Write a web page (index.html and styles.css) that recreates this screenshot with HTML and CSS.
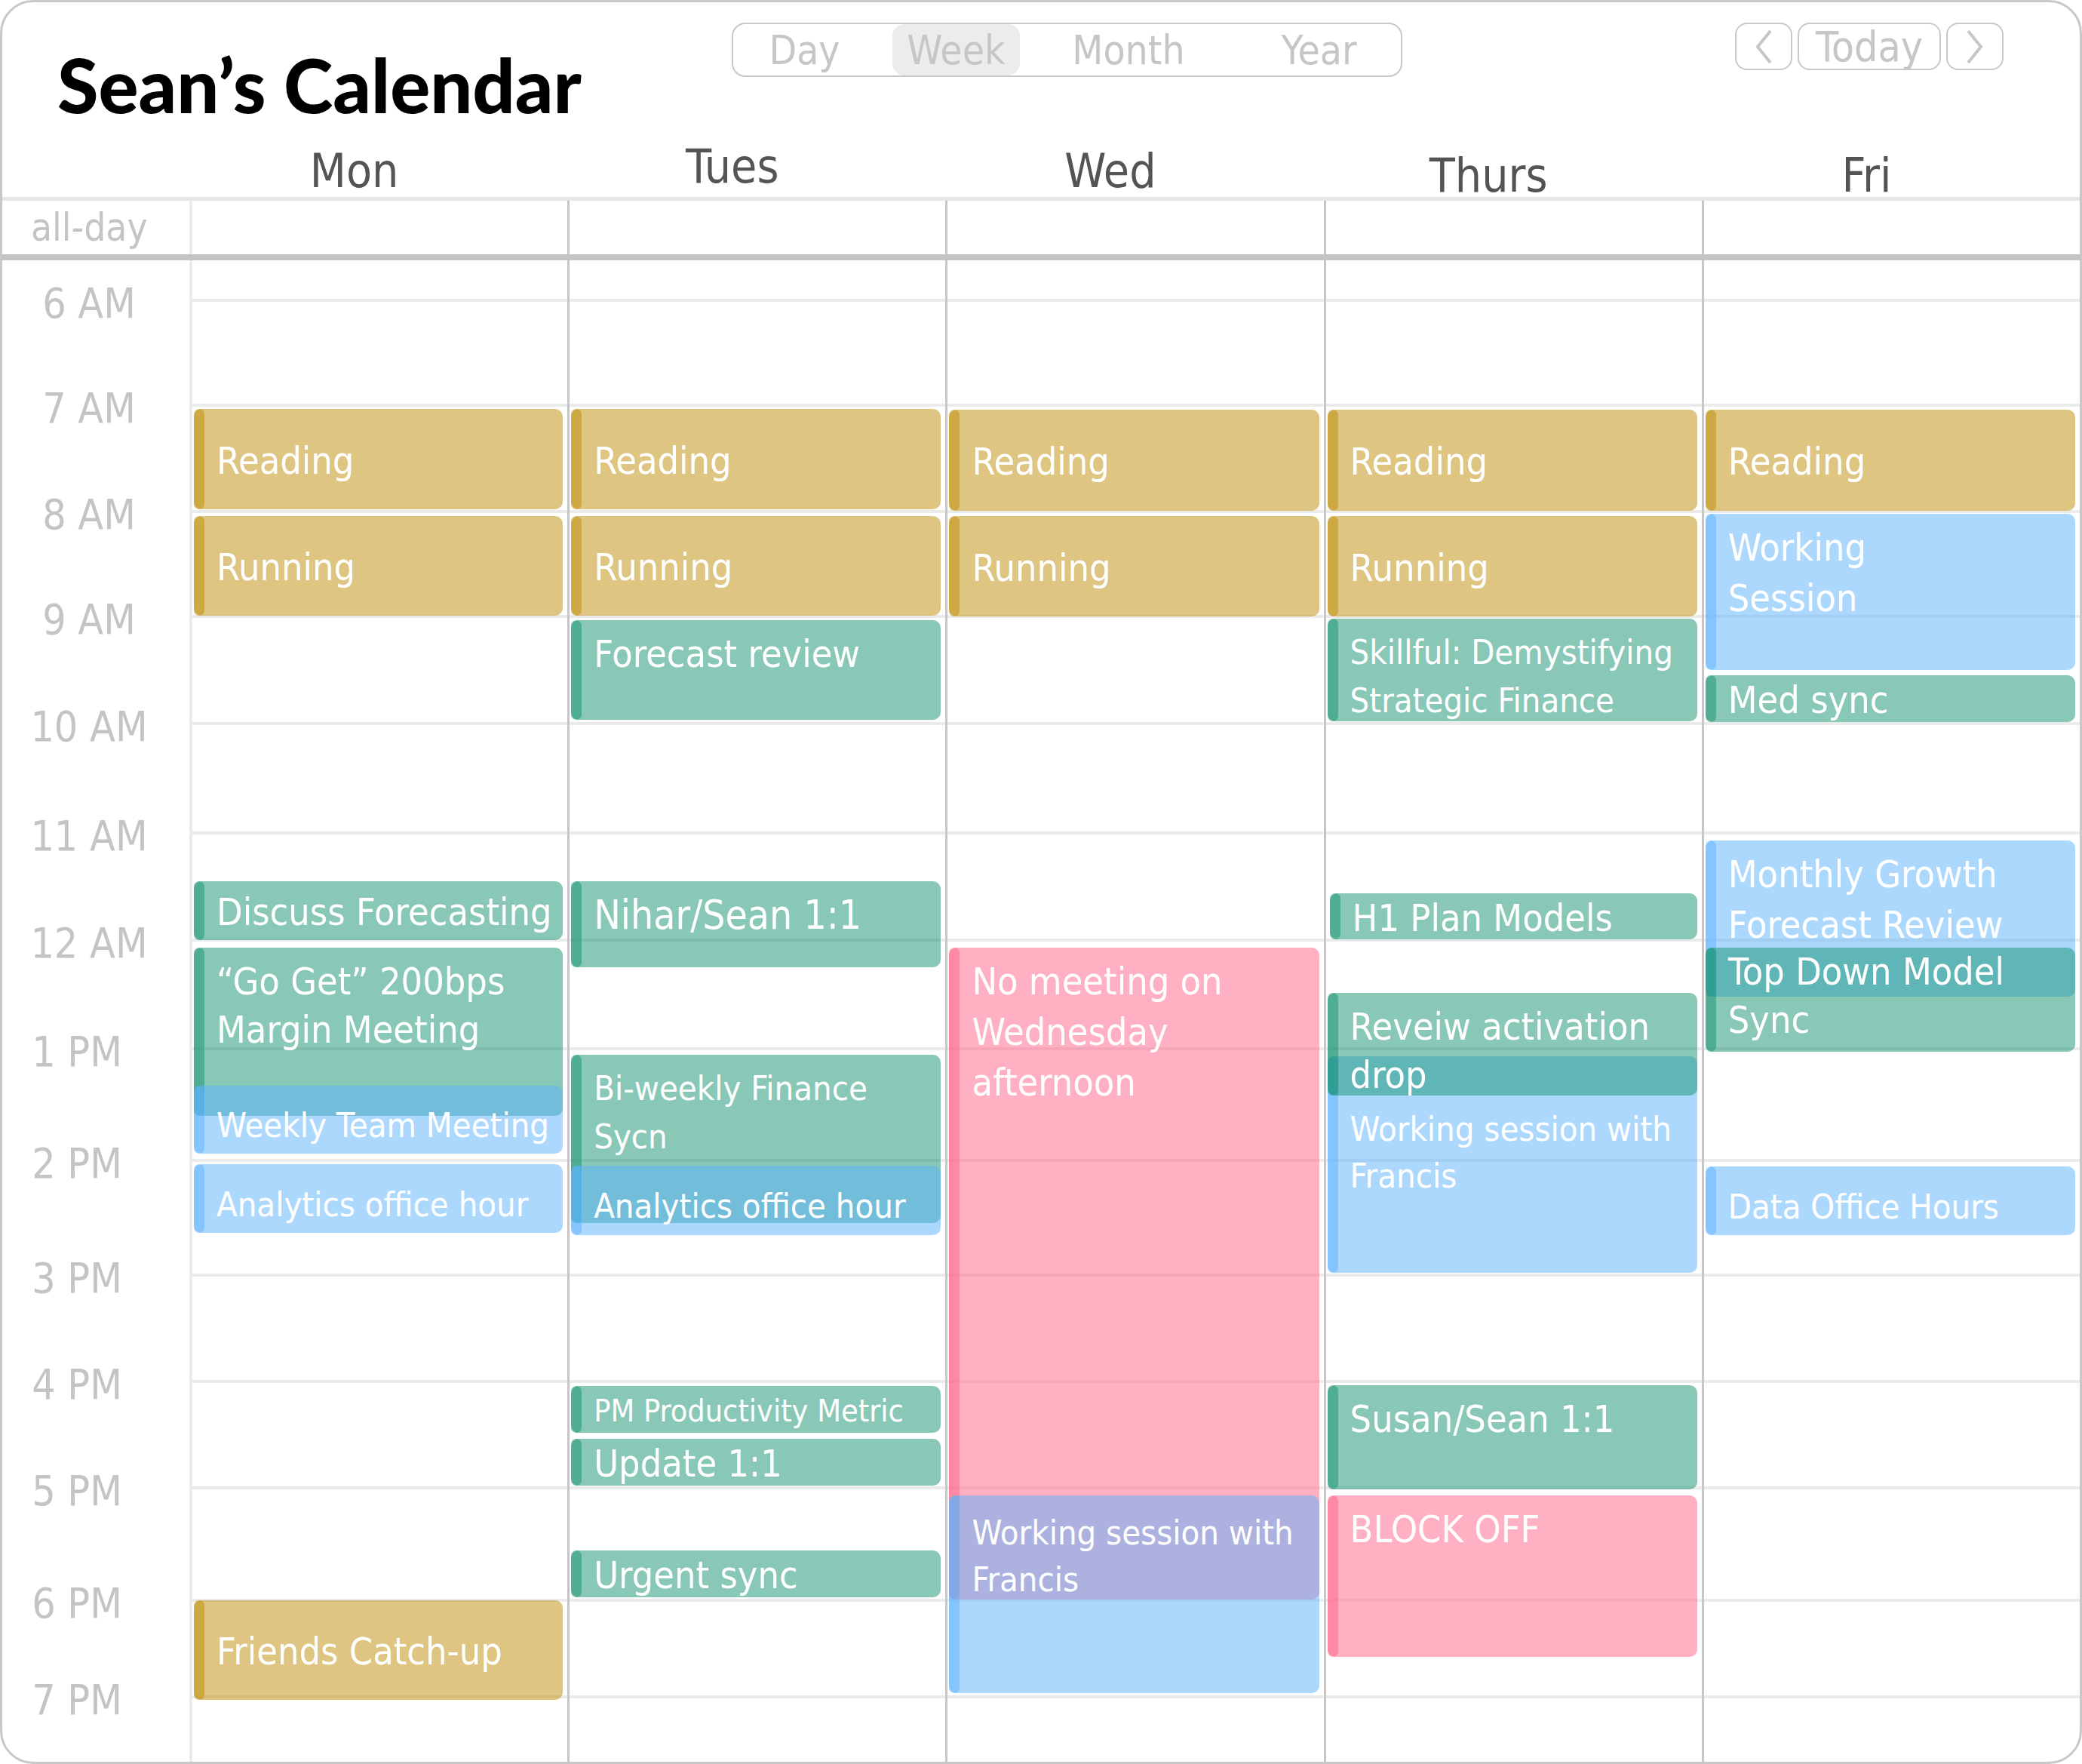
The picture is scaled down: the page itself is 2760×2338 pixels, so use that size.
FILE: index.html
```html
<!DOCTYPE html>
<html lang="en">
<head>
<meta charset="utf-8">
<title>Sean’s Calendar</title>
<link rel="stylesheet" href="styles.css">
</head>
<body>
<div class="frame">
  <header class="topbar">
    <h1 class="title">Sean’s Calendar</h1>
    <div class="segmented">
      <div class="seg seg-day">Day</div>
      <div class="seg seg-week">Week</div>
      <div class="seg seg-month">Month</div>
      <div class="seg seg-year">Year</div>
    </div>
    <div class="nav">
      <div class="btn btn-arrow"><svg width="34" height="48" viewBox="0 0 34 48"><polyline points="26,3 9,24 26,45" fill="none" stroke="#c6c6c6" stroke-width="4"/></svg></div>
      <div class="btn btn-today">Today</div>
      <div class="btn btn-arrow"><svg width="34" height="48" viewBox="0 0 34 48"><polyline points="8,3 25,24 8,45" fill="none" stroke="#c6c6c6" stroke-width="4"/></svg></div>
    </div>
  </header>

  <div class="dayhead">
    <div></div>
    <div class="dname">Mon</div>
    <div class="dname dname-up">Tues</div>
    <div class="dname">Wed</div>
    <div class="dname dname-down">Thurs</div>
    <div class="dname dname-down">Fri</div>
  </div>

  <div class="allday">
    <div class="allday-label">all-day</div>
    <div class="cell first"></div>
    <div class="cell"></div>
    <div class="cell"></div>
    <div class="cell"></div>
    <div class="cell"></div>
  </div>

  <div class="body">
    <div class="hours">
      <div class="hours-top"></div>
      <div class="hour" style="height:139px"><span class="tlabel">6 AM</span><div class="hline"></div></div>
      <div class="hour" style="height:141px"><span class="tlabel">7 AM</span><div class="hline"></div></div>
      <div class="hour" style="height:139px"><span class="tlabel">8 AM</span><div class="hline"></div></div>
      <div class="hour" style="height:142px"><span class="tlabel">9 AM</span><div class="hline"></div></div>
      <div class="hour" style="height:145px"><span class="tlabel">10 AM</span><div class="hline"></div></div>
      <div class="hour" style="height:142px"><span class="tlabel">11 AM</span><div class="hline"></div></div>
      <div class="hour" style="height:144px"><span class="tlabel">12 AM</span><div class="hline"></div></div>
      <div class="hour" style="height:148px"><span class="tlabel pm">1 PM</span><div class="hline"></div></div>
      <div class="hour" style="height:152px"><span class="tlabel pm">2 PM</span><div class="hline"></div></div>
      <div class="hour" style="height:141px"><span class="tlabel pm">3 PM</span><div class="hline"></div></div>
      <div class="hour" style="height:141px"><span class="tlabel pm">4 PM</span><div class="hline"></div></div>
      <div class="hour" style="height:149px"><span class="tlabel pm">5 PM</span><div class="hline"></div></div>
      <div class="hour" style="height:128px"><span class="tlabel pm">6 PM</span><div class="hline"></div></div>
      <div class="hour last"><span class="tlabel pm">7 PM</span><div class="hline"></div></div>
    </div>

    <div class="day d1 first">
      <div class="ev gold mid" style="top:197px;height:133px"><span>Reading</span></div>
      <div class="ev gold mid" style="top:339px;height:132px"><span>Running</span></div>
      <div class="ev green mid" style="top:823px;height:78px"><span>Discuss Forecasting</span></div>
      <div class="ev green" style="top:911px;height:223px">“Go Get” 200bps<br>Margin Meeting</div>
      <div class="ev blue mid low fit" style="top:1094px;height:90px"><span>Weekly Team Meeting</span></div>
      <div class="ev blue mid low fit" style="top:1198px;height:91px"><span>Analytics office hour</span></div>
      <div class="ev gold mid" style="top:1776px;height:132px"><span>Friends Catch-up</span></div>
    </div>

    <div class="day d2">
      <div class="ev gold mid" style="top:197px;height:133px"><span>Reading</span></div>
      <div class="ev gold mid" style="top:339px;height:132px"><span>Running</span></div>
      <div class="ev green" style="top:477px;height:132px">Forecast review</div>
      <div class="ev green wide" style="top:823px;height:114px">Nihar/Sean 1:1</div>
      <div class="ev green fit" style="top:1053px;height:223px">Bi-weekly Finance<br>Sycn</div>
      <div class="ev blue mid low fit" style="top:1200px;height:92px"><span>Analytics office hour</span></div>
      <div class="ev green mid small" style="top:1492px;height:62px"><span>PM Productivity Metric</span></div>
      <div class="ev green mid" style="top:1562px;height:62px"><span>Update 1:1</span></div>
      <div class="ev green mid" style="top:1710px;height:62px"><span>Urgent sync</span></div>
    </div>

    <div class="day d3">
      <div class="ev gold mid" style="top:198px;height:134px"><span>Reading</span></div>
      <div class="ev gold mid" style="top:339px;height:133px"><span>Running</span></div>
      <div class="ev pink loose" style="top:911px;height:864px">No meeting on<br>Wednesday<br>afternoon</div>
      <div class="ev blue lower fit" style="top:1637px;height:262px">Working session with<br>Francis</div>
    </div>

    <div class="day d4">
      <div class="ev gold mid" style="top:198px;height:134px"><span>Reading</span></div>
      <div class="ev gold mid" style="top:339px;height:133px"><span>Running</span></div>
      <div class="ev green fit" style="top:475px;height:136px">Skillful: Demystifying<br>Strategic Finance</div>
      <div class="ev green mid inset" style="top:839px;height:61px"><span>H1 Plan Models</span></div>
      <div class="ev blue deep fit" style="top:1055px;height:287px">Working session with<br>Francis</div>
      <div class="ev green" style="top:971px;height:136px">Reveiw activation<br>drop</div>
      <div class="ev green" style="top:1491px;height:138px">Susan/Sean 1:1</div>
      <div class="ev pink" style="top:1637px;height:214px">BLOCK OFF</div>
    </div>

    <div class="day d5">
      <div class="ev gold mid" style="top:198px;height:134px"><span>Reading</span></div>
      <div class="ev blue loose" style="top:336px;height:207px">Working<br>Session</div>
      <div class="ev green mid" style="top:550px;height:62px"><span>Med sync</span></div>
      <div class="ev blue loose" style="top:769px;height:207px">Monthly Growth<br>Forecast Review</div>
      <div class="ev green tight" style="top:911px;height:138px">Top Down Model<br>Sync</div>
      <div class="ev blue mid low fit" style="top:1201px;height:91px"><span>Data Office Hours</span></div>
    </div>
  </div>
</div>
</body>
</html>
```

FILE: styles.css
```css
* {
  box-sizing: border-box;
}

html,
body {
  margin: 0;
  padding: 0;
  background: #ffffff;
}

body {
  font-family: "DejaVu Sans Condensed", "DejaVu Sans", sans-serif;
  font-stretch: condensed;
}

.frame {
  width: 2760px;
  height: 2338px;
  border: 3px solid #c8c8c8;
  border-radius: 44px;
  overflow: hidden;
  display: flex;
  flex-direction: column;
  background: #ffffff;
}

/* ---------- top bar ---------- */
.topbar {
  display: grid;
  grid-template-columns: 894px 889px 1fr auto;
  height: 155px;
  flex: none;
  padding: 0 101px 0 73px;
}

.title {
  margin: 59px 0 0;
  font-family: Lato, "Liberation Sans", sans-serif;
  font-stretch: normal;
  font-weight: 900;
  font-size: 99px;
  line-height: 99px;
  color: #000000;
  white-space: nowrap;
}

.segmented {
  margin-top: 27px;
  height: 72px;
  border: 2px solid #c8c8c8;
  border-radius: 18px;
  display: flex;
}

.seg {
  display: flex;
  align-items: center;
  justify-content: center;
  font-size: 53px;
  color: #c6c6c6;
}

.seg-day {
  width: 211px;
  padding-right: 22px;
}

.seg-week {
  width: 169px;
  background: #ececec;
  border-radius: 16px;
}

.seg-month {
  width: 288px;
}

.seg-year {
  width: 217px;
}

.nav {
  grid-column: 4;
  margin-top: 27px;
  display: flex;
  gap: 7px;
}

.btn {
  height: 63px;
  border: 2px solid #c8c8c8;
  border-radius: 16px;
  display: flex;
  align-items: center;
  justify-content: center;
  color: #c6c6c6;
  font-size: 55px;
}

.btn-arrow {
  width: 76px;
}

.btn-today {
  width: 190px;
}

/* ---------- day names ---------- */
.dayhead {
  display: grid;
  grid-template-columns: 248px repeat(5, 1fr);
  height: 108px;
  flex: none;
  border-bottom: 5px solid #e6e6e6;
  align-items: end;
}

.dname {
  text-align: center;
  padding: 0 64px 2px 0;
  font-size: 62px;
  line-height: 64px;
  color: #545454;
}

.dname-up {
  padding-bottom: 8px;
}

.dname-down {
  padding-bottom: 0;
  margin-bottom: -4px;
}

/* ---------- all-day row ---------- */
.allday {
  display: grid;
  grid-template-columns: 248px repeat(5, 1fr);
  height: 79px;
  flex: none;
  border-bottom: 8px solid #c4c4c4;
}

.allday-label {
  display: flex;
  align-items: center;
  padding-left: 38px;
  font-size: 51px;
  color: #c4c4c4;
}

.cell {
  border-left: 3px solid #c6c6c6;
}

.cell.first {
  border-left: 4px solid #ebebeb;
}

/* ---------- time grid ---------- */
.body {
  flex: 1;
  min-height: 0;
  display: grid;
  grid-template-columns: 248px repeat(5, 1fr);
  grid-template-rows: 1fr;
}

.hours {
  grid-column: 1 / -1;
  grid-row: 1;
  display: flex;
  flex-direction: column;
}

.hours-top {
  height: 51px;
  flex: none;
}

.hour {
  display: flex;
  flex: none;
}

.hour.last {
  flex: 1;
}

.tlabel {
  width: 248px;
  flex: none;
  height: 62px;
  line-height: 62px;
  font-size: 55px;
  color: #c4c4c4;
  text-align: center;
  padding-right: 18px;
  transform: translateY(-25px);
}

.tlabel.pm {
  padding-right: 50px;
}

.hline {
  flex: 1;
  border-top: 4px solid #ebebeb;
}

.day {
  grid-row: 1;
  position: relative;
  border-left: 3px solid #c6c6c6;
}

.day.first {
  border-left: 4px solid #ebebeb;
}

.d1 { grid-column: 2; }
.d2 { grid-column: 3; }
.d3 { grid-column: 4; }
.d4 { grid-column: 5; }
.d5 { grid-column: 6; }

/* ---------- events ---------- */
.ev {
  position: absolute;
  left: 2px;
  right: 6px;
  border-radius: 10px;
  background: var(--c);
  padding: 13px 0 0 30px;
  color: #ffffff;
  font-size: 50px;
  line-height: 64px;
  white-space: nowrap;
}

.ev::before {
  content: "";
  position: absolute;
  left: 0;
  top: 0;
  bottom: 0;
  width: 14px;
  border-radius: 7px;
  background: var(--c);
}

.gold { --c: rgba(189, 139, 3, 0.5); }
.green { --c: rgba(19, 145, 109, 0.5); }
.blue { --c: rgba(91, 177, 253, 0.5); }
.pink { --c: rgba(255, 97, 133, 0.5); }

.mid {
  display: flex;
  align-items: center;
  padding-top: 4px;
}

.mid.low {
  padding-top: 16px;
}

.fit {
  font-size: 45px;
}

.wide {
  font-size: 53px;
}

.small {
  font-size: 41px;
}

.loose {
  line-height: 67px;
  padding-top: 12px;
}

.lower {
  padding-top: 19px;
  line-height: 62px;
}

.deep {
  padding-top: 66px;
  line-height: 62px;
}

.tight {
  padding-top: 0;
}

.inset {
  left: 5px;
}
```
